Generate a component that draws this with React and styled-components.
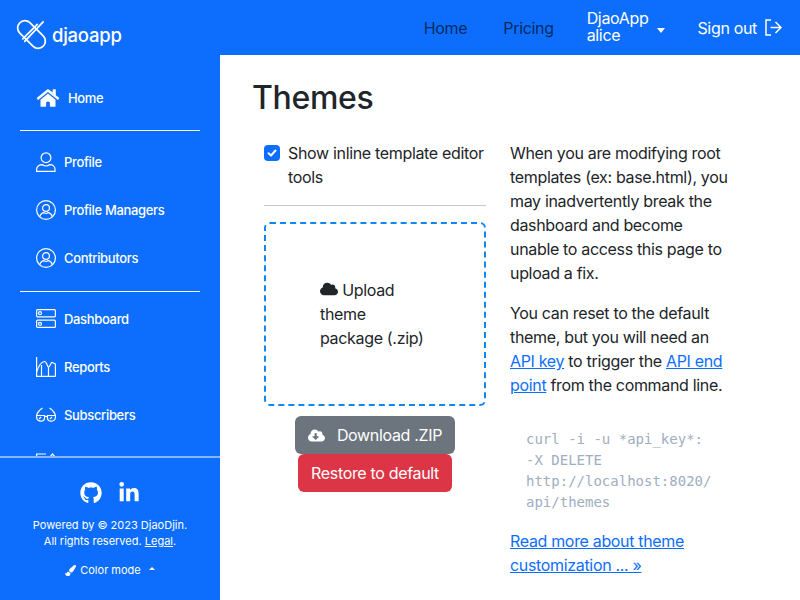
import React from "react";
import styled, { createGlobalStyle } from "styled-components";
import { FaHome, FaGithub, FaLinkedinIn, FaPaintBrush, FaCloud, FaCloudDownloadAlt } from "react-icons/fa";

const Global = createGlobalStyle`
  html, body { margin: 0; height: 100%; overflow: hidden; }
  body { font-family: Inter, "Liberation Sans", sans-serif; font-size: 16px; line-height: 24px; letter-spacing: -0.33px; color: #212529; background: #fff; }
  * { box-sizing: border-box; }
`;

const Shell = styled.div`
  width: 800px; height: 600px; display: flex; flex-direction: column; overflow: hidden;
`;
const TopBar = styled.header`
  height: 55px; flex: none; background: #0d6efd; display: flex; align-items: center; justify-content: space-between; padding: 0 18px 0 16px;
`;
const Brand = styled.div`
  display: flex; align-items: center; gap: 5px; color: #fff; font-size: 18.500px; font-weight: 500; letter-spacing: -0.25px; margin-top: 14px;
`;
const TopNav = styled.nav`
  display: flex; align-items: center;
`;
const TopLink = styled.a`
  color: rgba(0, 0, 0, 0.65); margin-right: ${(p) => p.$after}px;
`;
const Account = styled.div`
  display: flex; align-items: center; color: #fff; line-height: 16.500px; margin-right: 32px; margin-top: -2px;
`;
const Caret = styled.span`
  width: 0; height: 0; margin-left: 9px; margin-top: 7px; border-left: 4.500px solid transparent; border-right: 4.500px solid transparent; border-top: 5px solid #fff;
`;
const SignOut = styled.a`
  color: #fff; display: flex; align-items: center; gap: 8px;
`;
const Body = styled.div`
  flex: 1; display: flex; min-height: 0;
`;
const Sidebar = styled.aside`
  width: 220px; flex: none; background: #0d6efd; color: #fff; display: flex; flex-direction: column;
`;
const SideNav = styled.nav`
  flex: 1; min-height: 0; overflow: hidden; padding: 19px 20px 0;
`;
const SideItem = styled.a`
  height: 48px; display: flex; align-items: center; gap: 8px; padding-left: 16px; font-size: 13px; font-weight: 500; color: #fff; white-space: nowrap;
  svg { flex: none; }
`;
const HomeGlyph = styled(FaHome)`
  width: 24px; height: 20px;
`;
const SideRule = styled.hr`
  border: 0; height: 1px; background: #fff; margin: ${(p) => p.$top}px 0 ${(p) => p.$bottom}px;
`;
const SideFooter = styled.footer`
  height: 144px; flex: none; border-top: 2px solid rgba(255, 255, 255, 0.5); display: flex; flex-direction: column; align-items: center; font-size: 11px; line-height: 16px; letter-spacing: 0; padding-top: 23px;
`;
const Social = styled.div`
  display: flex; align-items: center; gap: 16px; height: 24px; margin-bottom: 12px;
`;
const Copy = styled.div`
  text-align: center; white-space: nowrap;
  a { color: #fff; text-decoration: underline; }
`;
const ColorMode = styled.div`
  display: flex; align-items: center; gap: 4px; margin-top: 13px;
`;
const SmallCaret = styled.span`
  width: 0; height: 0; margin-left: 4px; border-left: 3px solid transparent; border-right: 3px solid transparent; border-bottom: 3px solid #fff; margin-bottom: 3px;
`;
const Main = styled.main`
  flex: 1; padding: 21px 0 0 32px; min-width: 0;
`;
const Title = styled.h1`
  margin: 0 0 21px; font-size: 32px; line-height: 44px; font-weight: 500; letter-spacing: -0.35px; color: #212529;
`;
const Columns = styled.div`
  display: grid; grid-template-columns: 246px 244px;
`;
const Left = styled.section`
  padding: 0 12px; display: flex; flex-direction: column; align-items: stretch;
`;
const Right = styled.section`
  padding: 0 12px; 
`;
const CheckRow = styled.label`
  display: flex; gap: 8px;
`;
const Check = styled.span`
  flex: none; width: 16px; height: 16px; margin-top: 4px; border-radius: 4px; background: #0d6efd; display: flex; align-items: center; justify-content: center;
`;
const Rule = styled.hr`
  width: 100%; border: 0; height: 1px; background: #c8c8c8; margin: 16px 0;
`;
const Drop = styled.div`
  height: 184px; border: 2px dashed #0f87f0; border-radius: 6px; display: flex; align-items: center; justify-content: center;
`;
const DropText = styled.div`
  width: 110px;
  svg { vertical-align: -2px; }
`;
const Actions = styled.div`
  display: flex; flex-direction: column; align-items: center; margin-top: 10px;
`;
const Btn = styled.button`
  height: 38px; border: 0; border-radius: 6px; font: inherit; letter-spacing: inherit; color: #fff; background: ${(p) => p.$bg}; padding: 0 ${(p) => p.$pad}px; display: flex; align-items: center; gap: 12px;
`;
const Para = styled.p`
  margin: 0 0 16px;
`;
const Link = styled.a`
  color: #0d6efd; text-decoration: underline;
`;
const Code = styled.pre`
  margin: 32px 0 16px; padding-left: 16px; font-family: "DejaVu Sans Mono", monospace; font-size: 14px; line-height: 21px; letter-spacing: 0; color: #a0aec0;
`;

const stroke = { fill: "none", stroke: "#fff", strokeWidth: 1.2 };

const Logo = () => (
  <svg width="31" height="31" viewBox="0 0 32 32" fill="none" stroke="#fff" strokeWidth="1.800" strokeLinecap="round">
    <path d="M14.300 3.700 L28.300 17.700 A7.500 7.500 0 0 1 17.700 28.300 L3.700 14.300 A7.500 7.500 0 0 1 14.300 3.700z" />
    <path d="M28 3 L9 23" />
    <path d="M22 5.500 L7 20.500" />
  </svg>
);
const PersonIcon = () => (
  <svg width="20" height="20" viewBox="0 0 20 20" {...stroke}>
    <circle cx="10" cy="5.700" r="4.900" />
    <path d="M.6 19.400v-2.100c0-2.600 2.600-4.600 5.600-4.600h.4c1 .9 2.100 1.300 3.400 1.300s2.400-.4 3.400-1.300h.4c3 0 5.200 2 5.200 4.600v2.100z" />
  </svg>
);
const PersonCircleIcon = () => (
  <svg width="20" height="20" viewBox="0 0 20 20" {...stroke}>
    <circle cx="10" cy="10" r="9.400" />
    <circle cx="10" cy="8" r="3.400" />
    <path d="M3.700 16.800c.5-2.500 2.800-4.100 4.300-4.100.6.400 1.300.6 2 .6s1.400-.2 2-.6c1.500 0 3.800 1.600 4.300 4.100" />
  </svg>
);
const DashIcon = () => (
  <svg width="20" height="20" viewBox="0 0 20 20" {...stroke}>
    <rect x=".6" y=".6" width="18.800" height="7.200" rx="1" />
    <rect x=".6" y="11.200" width="18.800" height="7.200" rx="1" />
    <circle cx="4" cy="4.200" r="1.500" />
    <circle cx="4" cy="14.800" r="1.500" />
  </svg>
);
const ReportIcon = () => (
  <svg width="20" height="20" viewBox="0 0 20 20" {...stroke}>
    <path d="M.6 0v19.400h18.800" />
    <path d="M.6 15C3 8 6 4.500 8.500 4.500S11 10 12.500 10 15 4.500 16.500 5.500s2.500 1 2.900 1.500v12.400" />
    <path d="M5.500 8v11.400M12.500 10v9.400" />
  </svg>
);
const GlassesIcon = () => (
  <svg width="20" height="20" viewBox="0 0 20 20" {...stroke}>
    <path d="M.6 11C1 7 3.500 5 6.500 3M19.400 11C19 7 16.500 5 13.500 3" />
    <path d="M.6 10.500h8v2c0 2.500-1.700 3.700-3.700 3.700S.6 15 .6 12.500zM11.400 10.500h8v2c0 2.500-2.300 3.700-4.300 3.700s-3.700-1.200-3.700-3.700zM8.600 11.500h2.800" />
    <path d="M3 14l2-2M14 14l2-2" />
  </svg>
);
const PartialIcon = () => (
  <svg width="20" height="20" viewBox="0 0 20 20" {...stroke}>
    <path d="M10 1H.6v18.400h18.800V10" />
    <path d="M13 5l3.500-4L20 5" />
  </svg>
);
const ExitIcon = () => (
  <svg width="17" height="17" viewBox="0 0 17 17" fill="none" stroke="#fff" strokeWidth="1.500">
    <path d="M6 1H1v15h5M5.500 8.500H16M10.500 3l5.500 5.500-5.500 5.500" />
  </svg>
);
const Tick = () => (
  <svg width="10" height="8" viewBox="0 0 10 8" fill="none" stroke="#fff" strokeWidth="2" strokeLinecap="round" strokeLinejoin="round">
    <path d="M1.500 4.200 4 6.500l4.500-5" />
  </svg>
);

const CURL = `curl -i -u *api_key*:
-X DELETE
http://localhost:8020/
api/themes`;

export default function App() {
  return (
    <Shell>
      <Global />
      <TopBar>
        <Brand><Logo />djaoapp</Brand>
        <TopNav>
          <TopLink $after={36}>Home</TopLink>
          <TopLink $after={33}>Pricing</TopLink>
          <Account>
            <div>DjaoApp<br />alice</div>
            <Caret />
          </Account>
          <SignOut>Sign out <ExitIcon /></SignOut>
        </TopNav>
      </TopBar>
      <Body>
        <Sidebar>
          <SideNav>
            <SideItem><HomeGlyph />Home</SideItem>
            <SideRule $top={8} $bottom={7} />
            <SideItem><PersonIcon />Profile</SideItem>
            <SideItem><PersonCircleIcon />Profile Managers</SideItem>
            <SideItem><PersonCircleIcon />Contributors</SideItem>
            <SideRule $top={9} $bottom={3} />
            <SideItem><DashIcon />Dashboard</SideItem>
            <SideItem><ReportIcon />Reports</SideItem>
            <SideItem><GlassesIcon />Subscribers</SideItem>
            <SideItem><PartialIcon /></SideItem>
          </SideNav>
          <SideFooter>
            <Social><FaGithub size={22} /><FaLinkedinIn size={22} /></Social>
            <Copy>Powered by © 2023 DjaoDjin.<br />All rights reserved. <a>Legal</a>.</Copy>
            <ColorMode><FaPaintBrush size={11} />Color mode<SmallCaret /></ColorMode>
          </SideFooter>
        </Sidebar>
        <Main>
          <Title>Themes</Title>
          <Columns>
            <Left>
              <CheckRow><Check><Tick /></Check><span>Show inline template editor tools</span></CheckRow>
              <Rule />
              <Drop>
                <DropText><FaCloud size={18} /> Upload theme package (.zip)</DropText>
              </Drop>
              <Actions>
                <Btn $bg="#6c757d" $pad={13}><FaCloudDownloadAlt size={17} />Download .ZIP</Btn>
                <Btn $bg="#dc3545" $pad={13}>Restore to default</Btn>
              </Actions>
            </Left>
            <Right>
              <Para>When you are modifying root templates (ex: base.html), you may inadvertently break the dashboard and become unable to access this page to upload a fix.</Para>
              <Para>You can reset to the default theme, but you will need an <Link>API key</Link> to trigger the <Link>API end point</Link> from the command line.</Para>
              <Code>{CURL}</Code>
              <Link>Read more about theme customization ... »</Link>
            </Right>
          </Columns>
        </Main>
      </Body>
    </Shell>
  );
}
